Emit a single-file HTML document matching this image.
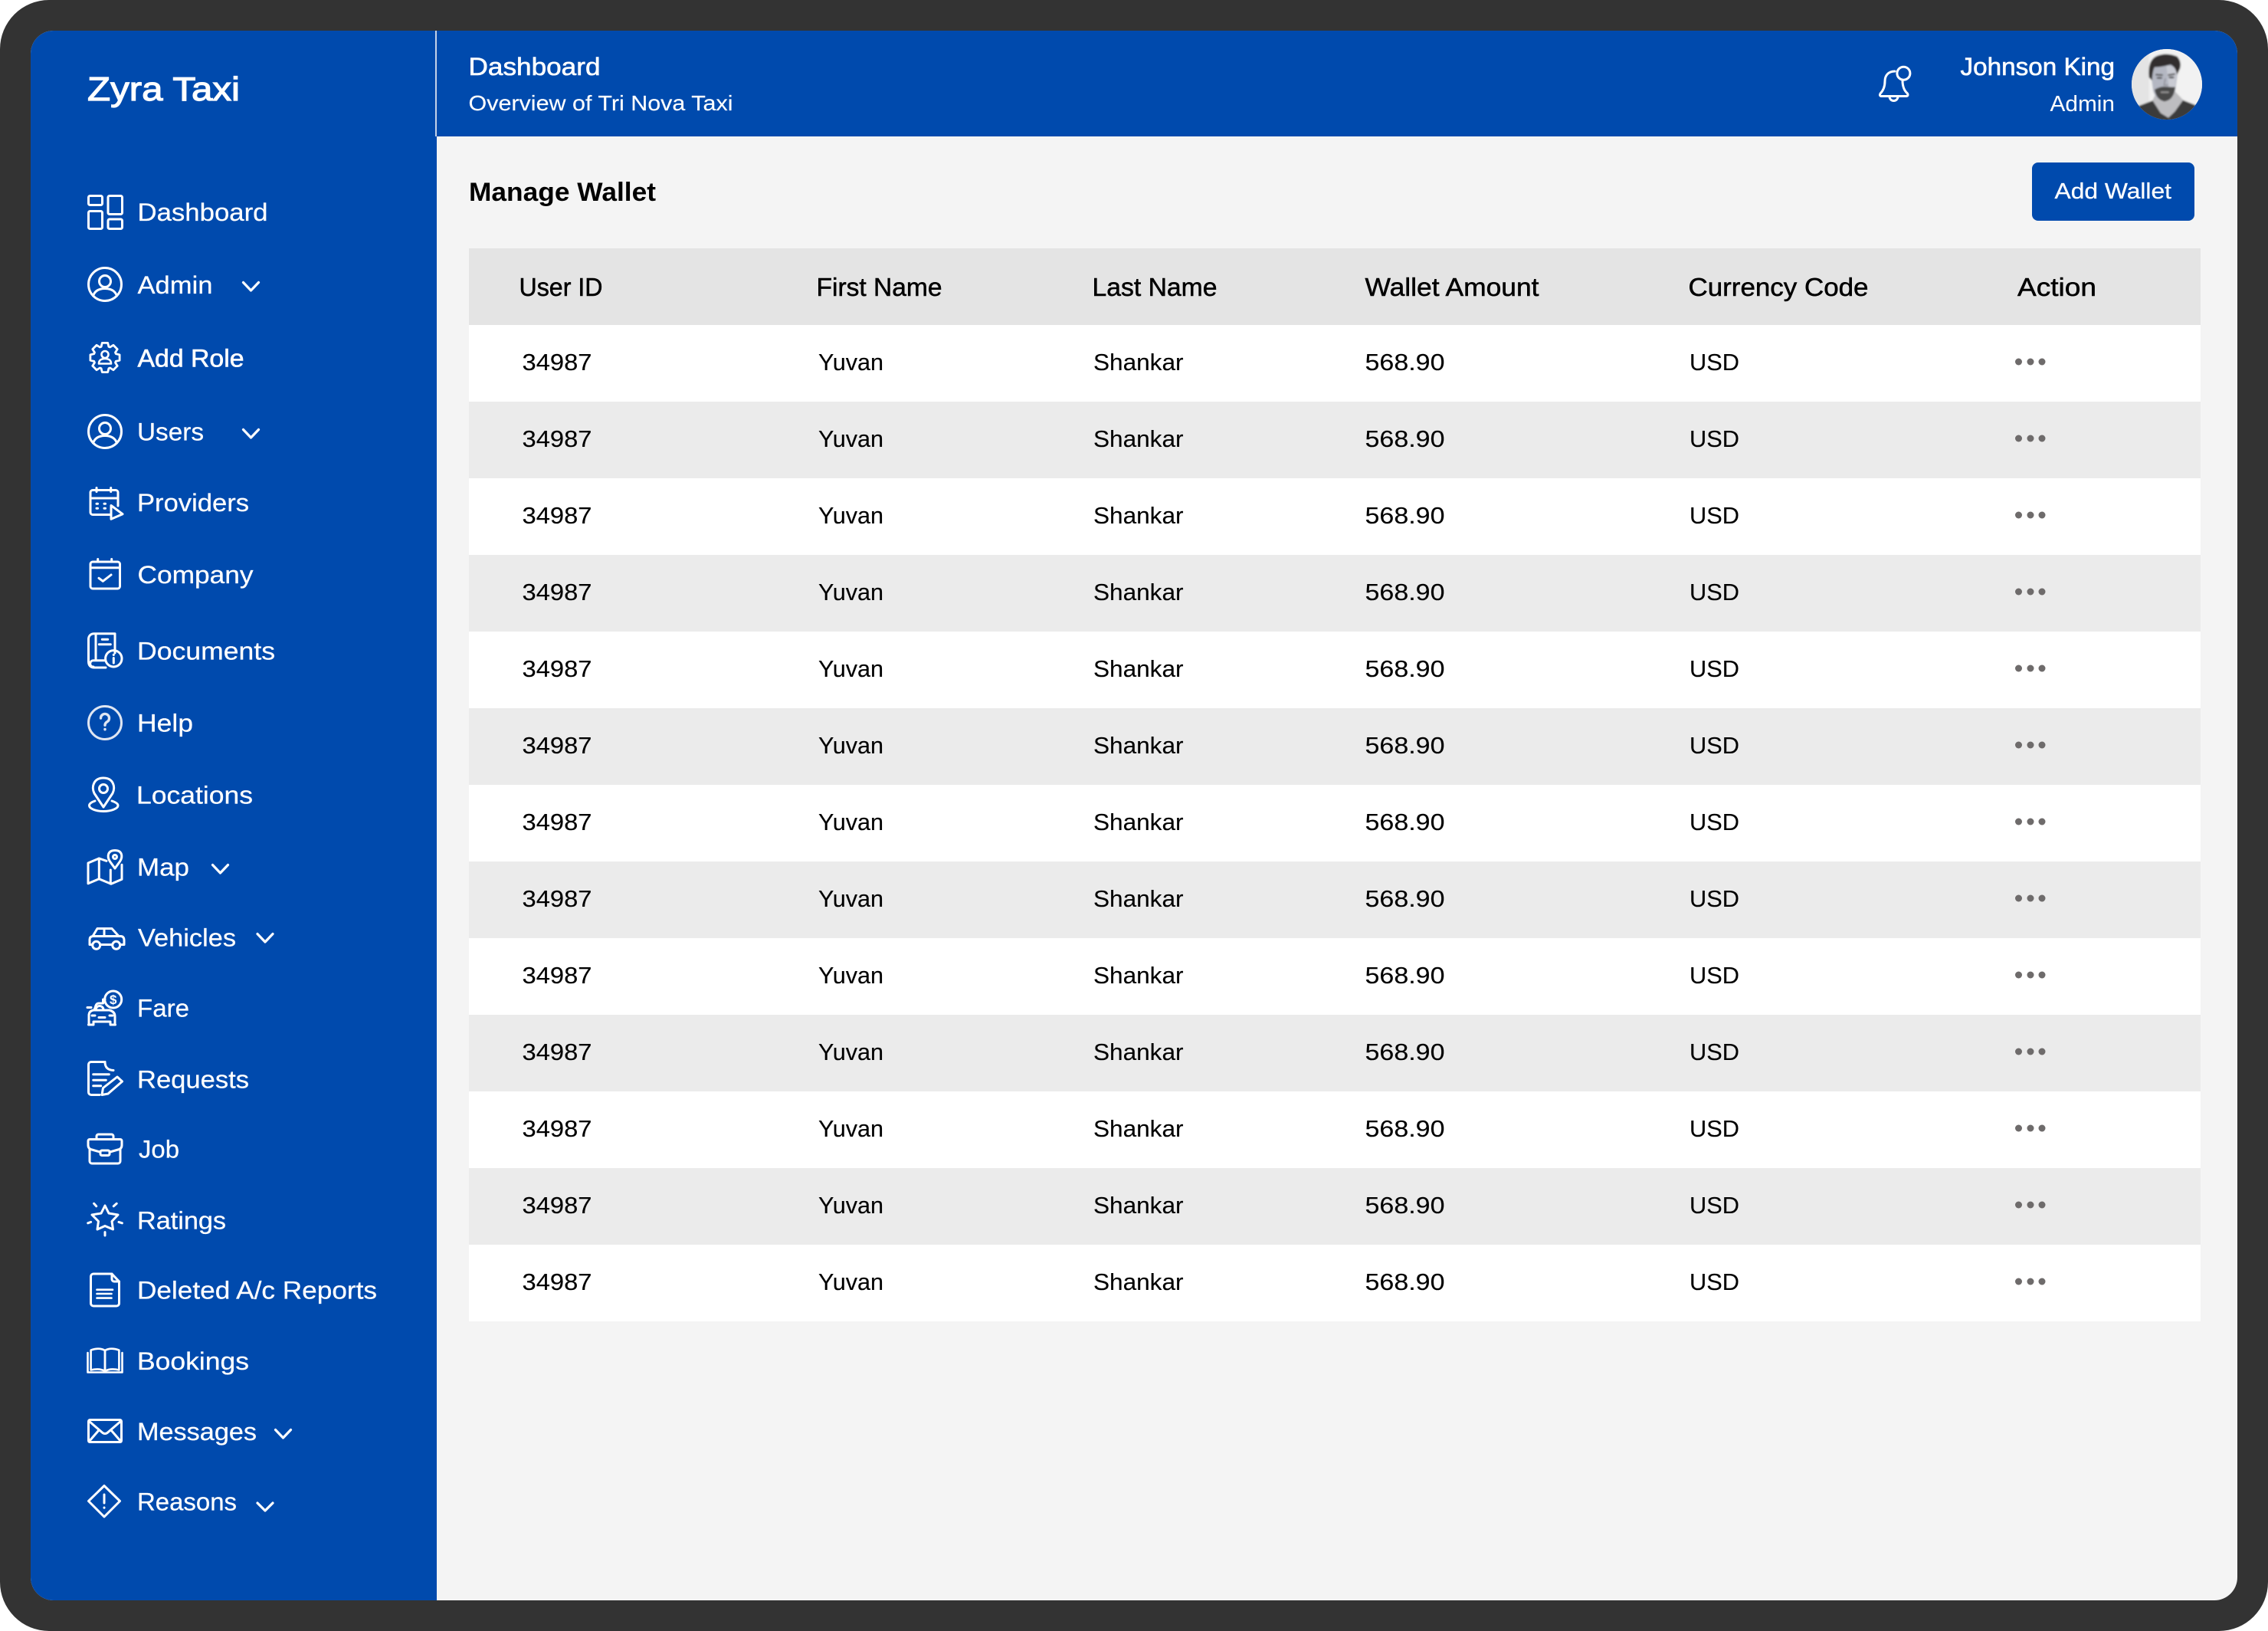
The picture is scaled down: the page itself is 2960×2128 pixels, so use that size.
<!DOCTYPE html>
<html lang="en">
<head>
<meta charset="utf-8">
<title>Manage Wallet</title>
<style>
html,body{margin:0;padding:0;background:#fff;width:2960px;height:2128px;overflow:hidden}
svg{display:block}
text{font-family:"Liberation Sans",sans-serif}
.n{font-size:32px;fill:#fff;stroke:#fff;stroke-width:.25px}
.nm{font-size:32px;fill:#fff;stroke:#fff;stroke-width:.6px}
.h{font-size:33px;fill:#000;stroke:#000;stroke-width:.5px}
.r{font-size:31px;fill:#000;stroke:#000;stroke-width:.12px}
.i{fill:none;stroke:#fff;stroke-width:3;stroke-linecap:round;stroke-linejoin:round}
.c{fill:none;stroke:#fff;stroke-width:3.2;stroke-linecap:round;stroke-linejoin:round}
.d{fill:#6e6b6b}
</style>
</head>
<body>
<svg xmlns="http://www.w3.org/2000/svg" width="2960" height="2128" viewBox="0 0 2960 2128">
<defs>
<clipPath id="inner"><rect x="40" y="40" width="2880" height="2048" rx="30"/></clipPath>
<clipPath id="av"><circle cx="174" cy="165" r="138"/></clipPath>
<filter id="soft" x="-10%" y="-10%" width="120%" height="120%"><feGaussianBlur stdDeviation="3.5"/></filter>
</defs>
<rect width="2960" height="2128" rx="64" fill="#333333"/>
<g clip-path="url(#inner)">
<rect x="40" y="40" width="2880" height="2048" fill="#f4f4f4"/>
<rect x="40" y="40" width="530" height="2048" fill="#004aad"/>
<rect x="570" y="40" width="2350" height="138" fill="#004aad"/>
<rect x="568" y="40" width="2" height="138" fill="#c4d2e8"/>
</g>

<!-- Sidebar text -->
<text x="114" y="131" font-size="44" fill="#fff" stroke="#fff" stroke-width="1.2" textLength="199" lengthAdjust="spacingAndGlyphs">Zyra Taxi</text>
<text class="n" x="179.500" y="288" textLength="170" lengthAdjust="spacingAndGlyphs">Dashboard</text>
<text class="n" x="179.500" y="383" textLength="98" lengthAdjust="spacingAndGlyphs">Admin</text>
<text class="nm" x="179.500" y="478.500" textLength="139" lengthAdjust="spacingAndGlyphs">Add Role</text>
<text class="n" x="179" y="574.500" textLength="87" lengthAdjust="spacingAndGlyphs">Users</text>
<text class="n" x="179" y="667" textLength="146" lengthAdjust="spacingAndGlyphs">Providers</text>
<text class="n" x="179.500" y="761" textLength="151" lengthAdjust="spacingAndGlyphs">Company</text>
<text class="n" x="179" y="860.500" textLength="180" lengthAdjust="spacingAndGlyphs">Documents</text>
<text class="n" x="179" y="954.500" textLength="73" lengthAdjust="spacingAndGlyphs">Help</text>
<text class="n" x="178" y="1048.500" textLength="152" lengthAdjust="spacingAndGlyphs">Locations</text>
<text class="n" x="179" y="1142.500" textLength="68" lengthAdjust="spacingAndGlyphs">Map</text>
<text class="n" x="180" y="1234.500" textLength="128" lengthAdjust="spacingAndGlyphs">Vehicles</text>
<text class="n" x="179" y="1326.500" textLength="68" lengthAdjust="spacingAndGlyphs">Fare</text>
<text class="n" x="179" y="1419.500" textLength="146" lengthAdjust="spacingAndGlyphs">Requests</text>
<text class="n" x="181" y="1510.500" textLength="53" lengthAdjust="spacingAndGlyphs">Job</text>
<text class="n" x="179" y="1603.500" textLength="116" lengthAdjust="spacingAndGlyphs">Ratings</text>
<text class="n" x="179" y="1694.500" textLength="313" lengthAdjust="spacingAndGlyphs">Deleted A/c Reports</text>
<text class="n" x="179" y="1787" textLength="146" lengthAdjust="spacingAndGlyphs">Bookings</text>
<text class="n" x="179" y="1879" textLength="156" lengthAdjust="spacingAndGlyphs">Messages</text>
<text class="n" x="179" y="1970.500" textLength="130" lengthAdjust="spacingAndGlyphs">Reasons</text>

<!-- Chevrons -->
<path class="c" d="M317.5 368.5L327.5 379L337.5 368.5"/>
<path class="c" d="M317.5 560.5L327.5 571L337.5 560.5"/>
<path class="c" d="M277.5 1128.5L287.5 1139L297.5 1128.5"/>
<path class="c" d="M336 1218.5L346 1229L356 1218.5"/>
<path class="c" d="M359.5 1865.5L369.5 1876L379.5 1865.5"/>
<path class="c" d="M336 1961L346 1971L356 1961"/>

<!-- Sidebar icons -->
<g class="i">
<!-- dashboard -->
<rect x="115.5" y="255.5" width="18" height="12" rx="2"/>
<rect x="141" y="255.5" width="18.5" height="24" rx="2"/>
<rect x="115.5" y="275.5" width="18" height="23" rx="2"/>
<rect x="141" y="286" width="18.5" height="12.5" rx="2"/>
<!-- admin -->
<circle cx="137" cy="371" r="21.5"/><circle cx="137" cy="367" r="7.5"/>
<path d="M121.5 386C124 379 130 376.5 137 376.5S150 379 152.5 386"/>
<!-- gear -->
<g transform="translate(137 466.5)">
<path stroke-width="2.8" d="M14.2 -4.9L19.1 -3.7L19.1 3.7L14.2 4.9L13.5 6.6L16.2 10.9L10.9 16.2L6.6 13.5L4.9 14.2L3.7 19.1L-3.7 19.1L-4.9 14.2L-6.6 13.5L-10.9 16.2L-16.2 10.9L-13.5 6.6L-14.2 4.9L-19.1 3.7L-19.1 -3.7L-14.2 -4.9L-13.5 -6.6L-16.2 -10.9L-10.9 -16.2L-6.6 -13.5L-4.9 -14.2L-3.7 -19.1L3.7 -19.1L4.9 -14.2L6.6 -13.5L10.9 -16.2L16.2 -10.9L13.5 -6.6Z"/>
<circle cx="0" cy="-4" r="4.5" stroke-width="2.6"/>
<path stroke-width="2.6" d="M-8 8C-8 3 -4 1.5 0 1.5S8 3 8 8Z"/>
</g>
<!-- users -->
<circle cx="137" cy="563" r="21.5"/><circle cx="137" cy="559" r="7.5"/>
<path d="M121.5 578C124 571 130 568.5 137 568.5S150 571 152.5 578"/>
<!-- providers -->
<path d="M145 671.5H121a3 3 0 0 1-3-3V642.5a3 3 0 0 1 3-3H151a3 3 0 0 1 3 3V660"/>
<path d="M126 636.5V641.5M144.7 636.5V641.5M118 650H154"/>
<path d="M126 657.3H127.5M136 657.3H137.5M126 663.3H127.5M136 663.3H137.5"/>
<path d="M145 659.5L160 670.7L145 677.3Z"/>
<!-- company -->
<rect x="118" y="733" width="38.5" height="35" rx="3"/>
<path d="M127.7 729.5V733M145.7 729.5V733M118 740.7H156.5"/>
<path d="M129 754.3L134.3 758.3L145 750"/>
<!-- documents -->
<path d="M150 852V826.7H123C118 826.7 115.5 830 115.5 834V863C115.5 868 118 871 123 871H138"/>
<path d="M125 827V861.7M137 861.7H122C116.5 861.7 116 870 122 870"/>
<path d="M133.3 834.3H140.7M129.3 840.7H144.3"/>
<circle cx="148.3" cy="859.3" r="10.7"/>
<path d="M148.3 854.3V854.5M148.3 858.5V865"/>
<!-- help -->
<g stroke="#dfe6f2"><circle cx="137" cy="943" r="21.5"/>
<path stroke-width="3.4" d="M131.5 937a5.5 5.5 0 1 1 8.5 4.6c-2 1.3-3 2.4-3 4.6M137 951.5V951.7"/></g>
<!-- location -->
<path d="M135 1053L123 1035C119 1027 122 1015 135 1015C148 1015 151 1027 147 1035Z"/>
<circle cx="135" cy="1029" r="5.5"/>
<path d="M124 1045C118 1047 116.5 1049 116.5 1051C116.5 1055 125 1058.5 135 1058.5S154 1055 154 1051C154 1049 152 1047 146 1045"/>
<!-- map -->
<path d="M150 1133L143.5 1124C139 1117 141 1109.5 150 1109.5C159 1109.5 161 1117 156.5 1124Z"/>
<circle cx="150" cy="1118" r="2.5"/>
<path d="M139 1123.3L129.3 1120L115 1126V1152.7L129.3 1146.7L145 1153.3L159 1147.3V1128.3"/>
<path d="M129.3 1120V1146.7M144.3 1135V1153"/>
<!-- car -->
<path d="M120.5 1232.5H117V1226Q117 1222 121 1221.5L127 1211.5H146L155 1221.5H158Q162 1222 162 1227V1232.5H157"/>
<path d="M131 1232.5H146.5M121 1221.5H155M136 1211.5V1221.5"/>
<circle cx="125.7" cy="1233.3" r="5"/><circle cx="151.7" cy="1233.3" r="5"/>
<!-- fare -->
<circle cx="147.7" cy="1304" r="11"/>
<path d="M123 1318L125 1312Q126 1309 129 1309H134.5V1304H137"/>
<path d="M116 1337V1325Q116 1319 122 1318H143Q150 1320 150 1326V1337"/>
<path d="M115.5 1337H122V1333H144V1337H150.5"/>
<path d="M125 1317.5a5 5 0 0 1 10 0M114 1314.5H119M120 1325H124M143 1325H147M129 1327.5H137"/>
<!-- requests -->
<path d="M137 1385.5H119a3.5 3.5 0 0 0-3.5 3.5V1425a3.5 3.5 0 0 0 3.5 3.5H130"/>
<path d="M137 1385.5C137 1392 140 1396 148 1396.5"/>
<path d="M121.7 1401.7H142.3M121.7 1409.3H138.3M121.7 1416.7H131.7"/>
<path d="M133 1428.5L134.5 1419.5L153 1405L159.5 1411L141 1427Z"/>
<!-- job -->
<path d="M126 1486.5V1482.5a2.5 2.5 0 0 1 2.5-2.5H145.5a2.5 2.5 0 0 1 2.5 2.5V1486.5"/>
<path d="M143.5 1503L154 1500Q159 1499 159 1494V1488.5a2 2 0 0 0-2-2H117a2 2 0 0 0-2 2V1494Q115 1499 120 1500L130.5 1503"/>
<path d="M117 1499.5V1515a3 3 0 0 0 3 3H154a3 3 0 0 0 3-3V1499.5"/>
<rect x="131" y="1501" width="12" height="6.5" rx="2"/>
<!-- ratings -->
<path d="M137 1573L142 1583L154 1585L146 1593.5L147.5 1604L137 1599.5L127 1604L128.5 1593.5L120 1585L132 1583Z"/>
<path d="M122.6 1570.3L125.7 1573.8M152.2 1570.3L148.3 1573.8M114.7 1595.8L118.6 1594.4M159.4 1595.8L155 1594.4M137 1607.6V1612"/>
<!-- deleted -->
<path d="M146 1662H122a3.5 3.5 0 0 0-3.5 3.5V1700.5a3.5 3.5 0 0 0 3.5 3.5H152a3.5 3.5 0 0 0 3.5-3.5V1672Z"/>
<path d="M146 1662V1669a3 3 0 0 0 3 3H155.5"/>
<path stroke-width="2.6" d="M126.5 1682.7H147M126.5 1688H145.5M126.5 1693.6H145.5"/>
<!-- bookings -->
<path stroke-width="2.6" d="M114.5 1765V1790.5H159.5V1765"/>
<path stroke-width="2.6" d="M118.6 1761.6C125 1759 132 1759 137 1762V1789C132 1786 125 1786 118.6 1787.5Z"/>
<path stroke-width="2.6" d="M155.4 1761.6C149 1759 142 1759 137 1762V1789C142 1786 149 1786 155.4 1787.5Z"/>
<!-- messages -->
<rect x="115.5" y="1852.5" width="43" height="29" rx="2"/>
<path d="M116 1854L134 1869.5Q137 1871.5 140 1869.5L158 1854M116 1881L129 1866M158 1881L145 1866"/>
<!-- reasons -->
<path d="M136 1938.5L156.5 1958.5L136 1979L115.5 1958.5Z"/>
<path d="M136 1950V1961M136 1967V1967.2"/>
</g>
<text x="147.7" y="1310" font-size="17" font-weight="700" fill="#fff" text-anchor="middle">$</text>

<!-- Header -->
<text class="nm" x="611.500" y="98" textLength="172" lengthAdjust="spacingAndGlyphs">Dashboard</text>
<text x="611.500" y="144" font-size="28" fill="#fff" stroke="#fff" stroke-width=".15" textLength="345" lengthAdjust="spacingAndGlyphs">Overview of Tri Nova Taxi</text>
<g class="i">
<path d="M2473 93C2464 93 2460 99 2460 106C2460 114 2457 119 2454 122Q2452.5 125 2455 125.5H2488Q2491 125 2489.5 122C2486 119 2483 114 2483 105"/>
<circle cx="2484.4" cy="95.7" r="8.5"/>
<path d="M2466 126a5.5 5.5 0 0 0 11 0"/>
</g>
<text class="nm" x="2558.500" y="98" textLength="201.500" lengthAdjust="spacingAndGlyphs">Johnson King</text>
<text x="2675.500" y="145" font-size="29" fill="#fff" textLength="84.500" lengthAdjust="spacingAndGlyphs">Admin</text>

<!-- Avatar -->
<circle cx="2828" cy="110" r="46" fill="#f0f0f0"/>
<g transform="translate(2770 55) scale(.33333)">
<g clip-path="url(#av)">
<g filter="url(#soft)">
<rect x="20" y="10" width="310" height="310" fill="#f2f2f2"/>
<rect x="20" y="10" width="85" height="310" fill="#e4e4e4"/>
<path d="M50 255L120 228L160 272L200 264L235 226L300 252V320H50Z" fill="#3a3a3a"/>
<path d="M118 228L135 192L205 192L238 226L205 272L180 296L150 278Z" fill="#bdbdc0"/>
<path d="M112 130Q112 90 165 85Q215 85 215 130L207 190Q190 225 160 228Q130 225 120 190Z" fill="#b4b7c2"/>
<path d="M160 92Q198 88 213 112L205 190L185 205L172 92Z" fill="#c9cbd3"/>
<path d="M104 138Q98 72 132 55Q172 38 214 56Q232 75 226 102L214 128Q208 95 188 88Q150 98 126 98Q118 112 116 150Z" fill="#302f2f"/>
<path d="M126 186Q145 174 165 174Q190 176 207 176Q202 226 165 232Q133 226 126 186Z" fill="#4a4848"/>
<path d="M150 196H182" stroke="#9a9898" stroke-width="6" fill="none"/>
<ellipse cx="145" cy="140" rx="12" ry="4" fill="#55555a"/>
<ellipse cx="192" cy="138" rx="12" ry="4" fill="#55555a"/>
<path d="M130 127L158 129M178 129L206 125" stroke="#4a4a4a" stroke-width="6" fill="none"/>
<path d="M168 142L163 168H178" stroke="#92939b" stroke-width="5" fill="none"/>
</g>
</g>
</g>

<!-- Title & button -->
<text x="612" y="262" font-size="34" font-weight="700" fill="#000" textLength="244" lengthAdjust="spacingAndGlyphs">Manage Wallet</text>
<rect x="2652" y="212" width="212" height="76" rx="8" fill="#004aad"/>
<text x="2681.500" y="259" font-size="29" fill="#fff" stroke="#fff" stroke-width=".3" textLength="152.500" lengthAdjust="spacingAndGlyphs">Add Wallet</text>

<!-- Table -->
<rect x="612" y="324" width="2260" height="100" fill="#e4e4e4"/>
<rect x="612" y="424" width="2260" height="100" fill="#fff"/>
<rect x="612" y="524" width="2260" height="100" fill="#ebebeb"/>
<rect x="612" y="624" width="2260" height="100" fill="#fff"/>
<rect x="612" y="724" width="2260" height="100" fill="#ebebeb"/>
<rect x="612" y="824" width="2260" height="100" fill="#fff"/>
<rect x="612" y="924" width="2260" height="100" fill="#ebebeb"/>
<rect x="612" y="1024" width="2260" height="100" fill="#fff"/>
<rect x="612" y="1124" width="2260" height="100" fill="#ebebeb"/>
<rect x="612" y="1224" width="2260" height="100" fill="#fff"/>
<rect x="612" y="1324" width="2260" height="100" fill="#ebebeb"/>
<rect x="612" y="1424" width="2260" height="100" fill="#fff"/>
<rect x="612" y="1524" width="2260" height="100" fill="#ebebeb"/>
<rect x="612" y="1624" width="2260" height="100" fill="#fff"/>

<text class="h" x="677.500" y="386" textLength="109" lengthAdjust="spacingAndGlyphs">User ID</text>
<text class="h" x="1065.500" y="386" textLength="164" lengthAdjust="spacingAndGlyphs">First Name</text>
<text class="h" x="1425.500" y="386" textLength="163" lengthAdjust="spacingAndGlyphs">Last Name</text>
<text class="h" x="1781.500" y="386" textLength="227" lengthAdjust="spacingAndGlyphs">Wallet Amount</text>
<text class="h" x="2203.500" y="386" textLength="235" lengthAdjust="spacingAndGlyphs">Currency Code</text>
<text class="h" x="2633" y="386" textLength="103" lengthAdjust="spacingAndGlyphs">Action</text>

<g id="rows">
<text class="r" x="681.500" y="483" textLength="91" lengthAdjust="spacingAndGlyphs">34987</text><text class="r" x="1068" y="483" textLength="85" lengthAdjust="spacingAndGlyphs">Yuvan</text><text class="r" x="1427" y="483" textLength="117.500" lengthAdjust="spacingAndGlyphs">Shankar</text><text class="r" x="1781.500" y="483" textLength="104" lengthAdjust="spacingAndGlyphs">568.90</text><text class="r" x="2205" y="483" textLength="65" lengthAdjust="spacingAndGlyphs">USD</text>
<text class="r" x="681.500" y="583" textLength="91" lengthAdjust="spacingAndGlyphs">34987</text><text class="r" x="1068" y="583" textLength="85" lengthAdjust="spacingAndGlyphs">Yuvan</text><text class="r" x="1427" y="583" textLength="117.500" lengthAdjust="spacingAndGlyphs">Shankar</text><text class="r" x="1781.500" y="583" textLength="104" lengthAdjust="spacingAndGlyphs">568.90</text><text class="r" x="2205" y="583" textLength="65" lengthAdjust="spacingAndGlyphs">USD</text>
<text class="r" x="681.500" y="683" textLength="91" lengthAdjust="spacingAndGlyphs">34987</text><text class="r" x="1068" y="683" textLength="85" lengthAdjust="spacingAndGlyphs">Yuvan</text><text class="r" x="1427" y="683" textLength="117.500" lengthAdjust="spacingAndGlyphs">Shankar</text><text class="r" x="1781.500" y="683" textLength="104" lengthAdjust="spacingAndGlyphs">568.90</text><text class="r" x="2205" y="683" textLength="65" lengthAdjust="spacingAndGlyphs">USD</text>
<text class="r" x="681.500" y="783" textLength="91" lengthAdjust="spacingAndGlyphs">34987</text><text class="r" x="1068" y="783" textLength="85" lengthAdjust="spacingAndGlyphs">Yuvan</text><text class="r" x="1427" y="783" textLength="117.500" lengthAdjust="spacingAndGlyphs">Shankar</text><text class="r" x="1781.500" y="783" textLength="104" lengthAdjust="spacingAndGlyphs">568.90</text><text class="r" x="2205" y="783" textLength="65" lengthAdjust="spacingAndGlyphs">USD</text>
<text class="r" x="681.500" y="883" textLength="91" lengthAdjust="spacingAndGlyphs">34987</text><text class="r" x="1068" y="883" textLength="85" lengthAdjust="spacingAndGlyphs">Yuvan</text><text class="r" x="1427" y="883" textLength="117.500" lengthAdjust="spacingAndGlyphs">Shankar</text><text class="r" x="1781.500" y="883" textLength="104" lengthAdjust="spacingAndGlyphs">568.90</text><text class="r" x="2205" y="883" textLength="65" lengthAdjust="spacingAndGlyphs">USD</text>
<text class="r" x="681.500" y="983" textLength="91" lengthAdjust="spacingAndGlyphs">34987</text><text class="r" x="1068" y="983" textLength="85" lengthAdjust="spacingAndGlyphs">Yuvan</text><text class="r" x="1427" y="983" textLength="117.500" lengthAdjust="spacingAndGlyphs">Shankar</text><text class="r" x="1781.500" y="983" textLength="104" lengthAdjust="spacingAndGlyphs">568.90</text><text class="r" x="2205" y="983" textLength="65" lengthAdjust="spacingAndGlyphs">USD</text>
<text class="r" x="681.500" y="1083" textLength="91" lengthAdjust="spacingAndGlyphs">34987</text><text class="r" x="1068" y="1083" textLength="85" lengthAdjust="spacingAndGlyphs">Yuvan</text><text class="r" x="1427" y="1083" textLength="117.500" lengthAdjust="spacingAndGlyphs">Shankar</text><text class="r" x="1781.500" y="1083" textLength="104" lengthAdjust="spacingAndGlyphs">568.90</text><text class="r" x="2205" y="1083" textLength="65" lengthAdjust="spacingAndGlyphs">USD</text>
<text class="r" x="681.500" y="1183" textLength="91" lengthAdjust="spacingAndGlyphs">34987</text><text class="r" x="1068" y="1183" textLength="85" lengthAdjust="spacingAndGlyphs">Yuvan</text><text class="r" x="1427" y="1183" textLength="117.500" lengthAdjust="spacingAndGlyphs">Shankar</text><text class="r" x="1781.500" y="1183" textLength="104" lengthAdjust="spacingAndGlyphs">568.90</text><text class="r" x="2205" y="1183" textLength="65" lengthAdjust="spacingAndGlyphs">USD</text>
<text class="r" x="681.500" y="1283" textLength="91" lengthAdjust="spacingAndGlyphs">34987</text><text class="r" x="1068" y="1283" textLength="85" lengthAdjust="spacingAndGlyphs">Yuvan</text><text class="r" x="1427" y="1283" textLength="117.500" lengthAdjust="spacingAndGlyphs">Shankar</text><text class="r" x="1781.500" y="1283" textLength="104" lengthAdjust="spacingAndGlyphs">568.90</text><text class="r" x="2205" y="1283" textLength="65" lengthAdjust="spacingAndGlyphs">USD</text>
<text class="r" x="681.500" y="1383" textLength="91" lengthAdjust="spacingAndGlyphs">34987</text><text class="r" x="1068" y="1383" textLength="85" lengthAdjust="spacingAndGlyphs">Yuvan</text><text class="r" x="1427" y="1383" textLength="117.500" lengthAdjust="spacingAndGlyphs">Shankar</text><text class="r" x="1781.500" y="1383" textLength="104" lengthAdjust="spacingAndGlyphs">568.90</text><text class="r" x="2205" y="1383" textLength="65" lengthAdjust="spacingAndGlyphs">USD</text>
<text class="r" x="681.500" y="1483" textLength="91" lengthAdjust="spacingAndGlyphs">34987</text><text class="r" x="1068" y="1483" textLength="85" lengthAdjust="spacingAndGlyphs">Yuvan</text><text class="r" x="1427" y="1483" textLength="117.500" lengthAdjust="spacingAndGlyphs">Shankar</text><text class="r" x="1781.500" y="1483" textLength="104" lengthAdjust="spacingAndGlyphs">568.90</text><text class="r" x="2205" y="1483" textLength="65" lengthAdjust="spacingAndGlyphs">USD</text>
<text class="r" x="681.500" y="1583" textLength="91" lengthAdjust="spacingAndGlyphs">34987</text><text class="r" x="1068" y="1583" textLength="85" lengthAdjust="spacingAndGlyphs">Yuvan</text><text class="r" x="1427" y="1583" textLength="117.500" lengthAdjust="spacingAndGlyphs">Shankar</text><text class="r" x="1781.500" y="1583" textLength="104" lengthAdjust="spacingAndGlyphs">568.90</text><text class="r" x="2205" y="1583" textLength="65" lengthAdjust="spacingAndGlyphs">USD</text>
<text class="r" x="681.500" y="1683" textLength="91" lengthAdjust="spacingAndGlyphs">34987</text><text class="r" x="1068" y="1683" textLength="85" lengthAdjust="spacingAndGlyphs">Yuvan</text><text class="r" x="1427" y="1683" textLength="117.500" lengthAdjust="spacingAndGlyphs">Shankar</text><text class="r" x="1781.500" y="1683" textLength="104" lengthAdjust="spacingAndGlyphs">568.90</text><text class="r" x="2205" y="1683" textLength="65" lengthAdjust="spacingAndGlyphs">USD</text>
</g>

<!-- Action dots -->
<g class="d">
<circle cx="2634.5" cy="472" r="4.5"/><circle cx="2650" cy="472" r="4.5"/><circle cx="2665" cy="472" r="4.5"/>
<circle cx="2634.5" cy="572" r="4.5"/><circle cx="2650" cy="572" r="4.5"/><circle cx="2665" cy="572" r="4.5"/>
<circle cx="2634.5" cy="672" r="4.5"/><circle cx="2650" cy="672" r="4.5"/><circle cx="2665" cy="672" r="4.5"/>
<circle cx="2634.5" cy="772" r="4.5"/><circle cx="2650" cy="772" r="4.5"/><circle cx="2665" cy="772" r="4.5"/>
<circle cx="2634.5" cy="872" r="4.5"/><circle cx="2650" cy="872" r="4.5"/><circle cx="2665" cy="872" r="4.5"/>
<circle cx="2634.5" cy="972" r="4.5"/><circle cx="2650" cy="972" r="4.5"/><circle cx="2665" cy="972" r="4.5"/>
<circle cx="2634.5" cy="1072" r="4.5"/><circle cx="2650" cy="1072" r="4.5"/><circle cx="2665" cy="1072" r="4.5"/>
<circle cx="2634.5" cy="1172" r="4.5"/><circle cx="2650" cy="1172" r="4.5"/><circle cx="2665" cy="1172" r="4.5"/>
<circle cx="2634.5" cy="1272" r="4.5"/><circle cx="2650" cy="1272" r="4.5"/><circle cx="2665" cy="1272" r="4.5"/>
<circle cx="2634.5" cy="1372" r="4.5"/><circle cx="2650" cy="1372" r="4.5"/><circle cx="2665" cy="1372" r="4.5"/>
<circle cx="2634.5" cy="1472" r="4.5"/><circle cx="2650" cy="1472" r="4.5"/><circle cx="2665" cy="1472" r="4.5"/>
<circle cx="2634.5" cy="1572" r="4.5"/><circle cx="2650" cy="1572" r="4.5"/><circle cx="2665" cy="1572" r="4.5"/>
<circle cx="2634.5" cy="1672" r="4.5"/><circle cx="2650" cy="1672" r="4.5"/><circle cx="2665" cy="1672" r="4.5"/>
</g>
</svg>
</body>
</html>
